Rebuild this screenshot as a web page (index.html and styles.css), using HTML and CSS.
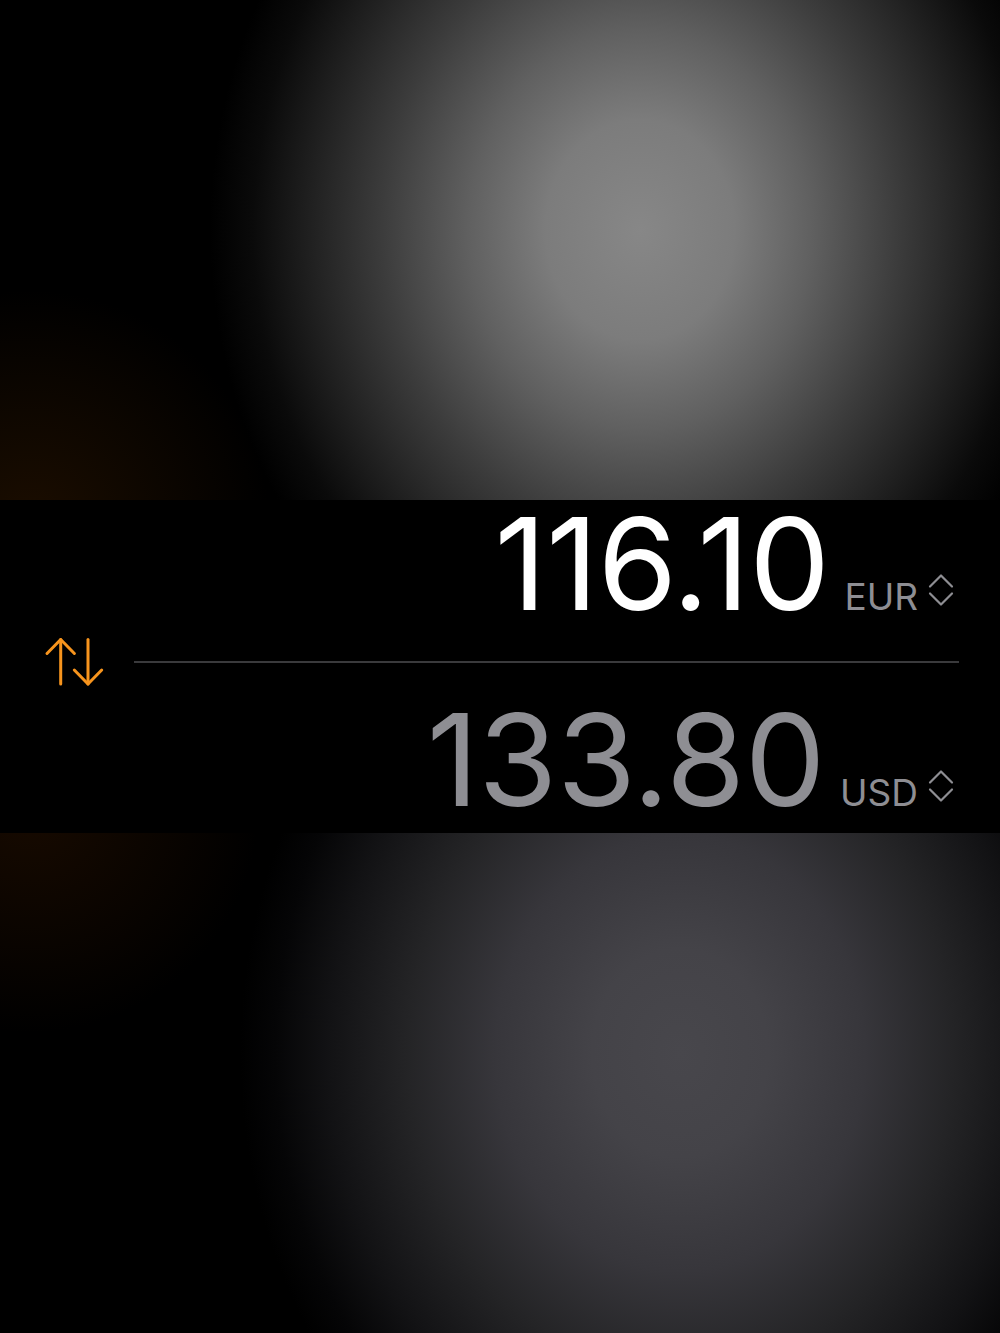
FILE: index.html
```html
<!DOCTYPE html>
<html lang="en">
<head>
    <meta charset="UTF-8">
    <meta name="viewport" content="width=device-width, initial-scale=1.0">
    <title>Currency Converter</title>
    <link rel="stylesheet" href="styles.css">
</head>
<body>
    <div class="screen">
        <!-- Fundo superior -->
        <div class="backdrop backdrop-top"></div>

        <div class="converter">
            <div class="pair-row">
                <span class="amount">116.10</span>
                <span class="code">EUR<svg class="picker" width="26" height="34" viewBox="0 0 26 34"><path d="M2 13.5 L13 2.5 L24 13.5"/><path d="M2 20.5 L13 31.5 L24 20.5"/></svg></span>
            </div>

            <div class="swap-row">
                <svg class="swap" width="60" height="50" viewBox="0 0 60 50">
                    <path d="M16.7 47 V2.5"/>
                    <path d="M3 16.5 L16.7 2.5 L30.4 16.5"/>
                    <path d="M44 2.5 V47"/>
                    <path d="M30.3 33 L44 47 L57.7 33"/>
                </svg>
                <div class="divider"></div>
            </div>

            <div class="pair-row pair-to">
                <span class="amount">133.80</span>
                <span class="code">USD<svg class="picker" width="26" height="34" viewBox="0 0 26 34"><path d="M2 13.5 L13 2.5 L24 13.5"/><path d="M2 20.5 L13 31.5 L24 20.5"/></svg></span>
            </div>
        </div>

        <!-- Fundo inferior -->
        <div class="backdrop backdrop-bottom"></div>
    </div>
</body>
</html>
```

FILE: styles.css
```css
body {
    margin: 0;
    padding: 0;
    background-color: #000;
    font-family: Inter, "Noto Sans", sans-serif;
}

.screen {
    width: 1000px;
    height: 1333px;
    display: flex;
    flex-direction: column;
    overflow: hidden;
}

.backdrop {
    height: 500px;
    flex-shrink: 0;
}

.backdrop-top {
    background:
        radial-gradient(circle 240px at 30px 530px, rgba(70, 34, 0, 0.4), rgba(70, 34, 0, 0) 100%),
        radial-gradient(ellipse 430px 500px at 640px 230px, #878787 0%, #7c7c7c 22%, #606060 40%, #3c3c3c 60%, #1e1e1e 78%, #0a0a0a 90%, #000 100%);
}

.backdrop-bottom {
    background:
        radial-gradient(circle 230px at 30px -30px, rgba(60, 26, 0, 0.4), rgba(60, 26, 0, 0) 100%),
        radial-gradient(ellipse 440px 520px at 680px 220px, #48474c 0%, #444348 20%, #37363b 42%, #242426 62%, #121214 80%, #050506 92%, #000 100%);
}

.converter {
    height: 333px;
    flex-shrink: 0;
    background-color: #000;
    display: flex;
    flex-direction: column;
}

.pair-row {
    height: 128px;
    display: flex;
    justify-content: flex-end;
    align-items: baseline;
    padding-right: 46px;
}

.amount {
    font-size: 128px;
    line-height: 128px;
    font-weight: 400;
    color: #fff;
    font-variant-numeric: proportional-nums;
    letter-spacing: -0.5px;
}

.pair-to .amount {
    color: #8e8e93;
}

.code {
    margin-left: 15px;
    font-size: 37px;
    color: #8e8e93;
}

.picker {
    margin-left: 10px;
    vertical-align: 3px;
    fill: none;
    stroke: #8e8e93;
    stroke-width: 2.2;
    stroke-linecap: round;
    stroke-linejoin: round;
}

.swap-row {
    height: 68px;
    display: flex;
    align-items: center;
    padding-left: 44px;
    padding-right: 41px;
}

.swap {
    flex-shrink: 0;
    fill: none;
    stroke: #f7941d;
    stroke-width: 3;
    stroke-linecap: round;
    stroke-linejoin: round;
}

.divider {
    flex: 1;
    height: 2px;
    margin-left: 30px;
    background-color: #3a3a3c;
}
```
